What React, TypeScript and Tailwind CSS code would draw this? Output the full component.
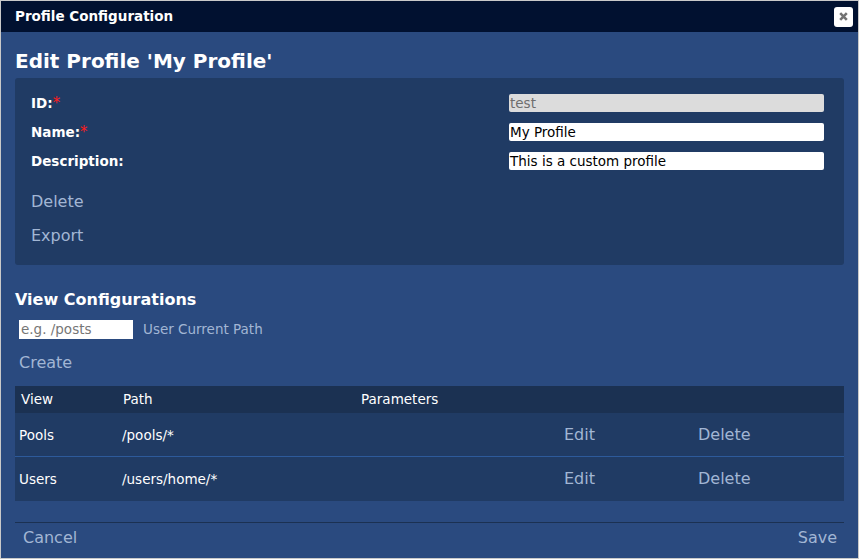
import React from "react";

const font = { fontFamily: '"DejaVu Sans", Verdana, sans-serif' };

function Field({ label, required, value, disabled }: { label: string; required?: boolean; value: string; disabled?: boolean }) {
  return (
    <div className="flex h-[18px] items-center justify-between">
      <div className="text-[13.5px] font-bold text-white leading-[18px]">
        {label}
        {required && <span className="text-[#ff1a1a] text-[15px] font-normal">*</span>}
      </div>
      <div
        className={
          "w-[315px] h-[18px] rounded-[2px] px-[1px] text-[13.5px] leading-[18px] " +
          (disabled ? "bg-[#dcdcdc] text-[#6e6e6e]" : "bg-white text-black")
        }
      >
        {value}
      </div>
    </div>
  );
}

function Row({ view, path, last }: { view: string; path: string; last?: boolean }) {
  return (
    <div
      className={
        "grid grid-cols-[103px_442px_134px_1fr] h-[44px] items-center pl-[4px] bg-[#203b64] text-[13.5px] " +
        (last ? "" : "border-b border-[#2d5a9b]")
      }
    >
      <div className="text-white">{view}</div>
      <div className="text-white">{path}</div>
      <div className="text-[16px] text-[#a2b6d4]">Edit</div>
      <div className="text-[16px] text-[#a2b6d4]">Delete</div>
    </div>
  );
}

export default function App() {
  return (
    <div style={font} className="w-[859px] h-[559px] border border-[#c9c9c9] bg-[#2a4a7f] flex flex-col overflow-hidden">
      <div className="h-[31px] shrink-0 bg-[#011130] flex items-center justify-between pl-[14px] pr-[5px]">
        <div className="text-[13.5px] font-bold text-white">Profile Configuration</div>
        <div className="w-[19px] h-[20px] bg-white rounded-[3px] flex items-center justify-center">
          <svg width="9" height="9" viewBox="0 0 9 9">
            <path d="M1.2 1.2 L7.8 7.8 M7.8 1.2 L1.2 7.8" stroke="#737373" strokeWidth="2.6" strokeLinecap="butt" />
          </svg>
        </div>
      </div>
      <div className="px-[14px] flex flex-col">
        <div className="mt-[17px] mb-[5px] text-[20px] leading-[24px] font-bold text-white">Edit Profile 'My Profile'</div>
        <div className="bg-[#203b64] rounded-[3px] pl-[16px] pr-[20px] pt-[16px] pb-[12px] flex flex-col">
          <div className="flex flex-col gap-[11px]">
            <Field label="ID:" required value="test" disabled />
            <Field label="Name:" required value="My Profile" />
            <Field label="Description:" value="This is a custom profile" />
          </div>
          <div className="mt-[15px] text-[16px] leading-[34px] text-[#a2b6d4]">Delete</div>
          <div className="text-[16px] leading-[34px] text-[#a2b6d4]">Export</div>
        </div>
        <div className="mt-[25px] text-[16px] leading-[20px] font-bold text-white">View Configurations</div>
        <div className="mt-[9px] ml-[4px] flex items-center">
          <div className="w-[114px] h-[19px] bg-white px-[2px] text-[13.5px] leading-[19px] text-[#767676]">e.g. /posts</div>
          <div className="ml-[10px] text-[13.5px] text-[#a2b6d4]">User Current Path</div>
        </div>
        <div className="mt-[12px] ml-[4px] text-[16px] leading-[24px] text-[#a2b6d4]">Create</div>
        <div className="mt-[11px] flex flex-col">
          <div className="grid grid-cols-[102px_238px_1fr] h-[27px] pb-[1px] items-center pl-[6px] bg-[#1b3152] text-[13.5px] text-white">
            <div>View</div>
            <div>Path</div>
            <div>Parameters</div>
          </div>
          <Row view="Pools" path="/pools/*" />
          <Row view="Users" path="/users/home/*" last />
        </div>
        <div className="mt-[21px] border-t border-[#1b3152] flex justify-between pl-[8px] pr-[7px] pt-[3px]">
          <div className="text-[16px] leading-[24px] text-[#a2b6d4]">Cancel</div>
          <div className="text-[16px] leading-[24px] text-[#a2b6d4]">Save</div>
        </div>
      </div>
    </div>
  );
}
